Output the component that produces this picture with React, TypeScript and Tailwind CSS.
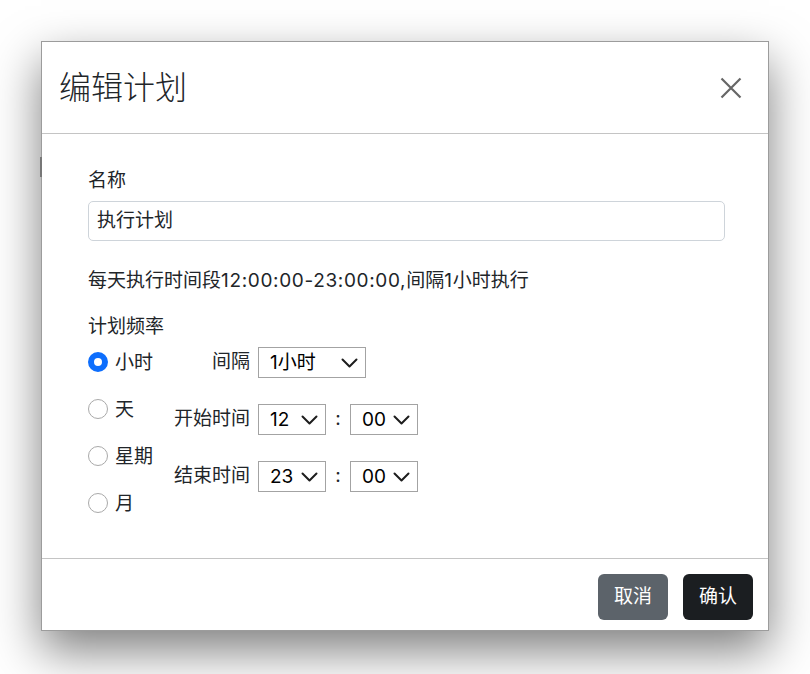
import React from "react";

const font = {
  fontFamily: '"Inter", "Noto Sans CJK SC", sans-serif',
};

function Chevron() {
  return (
    <svg width="17" height="10" viewBox="0 0 17 10" fill="none">
      <polyline
        points="1.5,1.5 8.5,8.5 15.5,1.5"
        stroke="#1d1d1d"
        strokeWidth="2"
        strokeLinecap="round"
        strokeLinejoin="round"
      />
    </svg>
  );
}

function FakeSelect({ value, width }: { value: string; width: string }) {
  return (
    <div
      className={`flex h-[31px] items-center justify-between border border-[#a3a3a3] bg-white pl-[11px] pr-[7px] text-[19px] text-black ${width}`}
    >
      <span className="leading-none">{value}</span>
      <Chevron />
    </div>
  );
}

function Radio({ label, checked }: { label: string; checked?: boolean }) {
  return (
    <label className="flex h-[30px] items-center gap-[7px]">
      {checked ? (
        <span className="block h-[20px] w-[20px] rounded-full border-[6px] border-[#0d6efd] bg-white" />
      ) : (
        <span className="block h-[20px] w-[20px] rounded-full border border-[#a9a9a9] bg-white" />
      )}
      <span className="text-[19px] leading-none text-[#212529]">{label}</span>
    </label>
  );
}

function TimeRow({ label, hour }: { label: string; hour: string }) {
  return (
    <div className="flex h-[31px] items-center">
      <span className="w-[76px] text-right text-[19px] text-[#212529]">
        {label}
      </span>
      <div className="ml-[8px] flex items-center">
        <FakeSelect value={hour} width="w-[68px]" />
        <span className="w-[24px] text-center text-[19px] text-[#212529]">:</span>
        <FakeSelect value="00" width="w-[68px]" />
      </div>
    </div>
  );
}

export default function App() {
  return (
    <div className="min-h-[674px] bg-white pl-[41px] pt-[41px]" style={font}>
      <div className="relative w-[728px] border border-[#9c9c9c] bg-white shadow-[0_20px_45px_rgba(0,0,0,0.5)]">
        <div className="absolute left-[-2px] top-[115px] h-[20px] w-[2px] bg-[#777]" />

        {/* header */}
        <div className="flex h-[92px] items-center justify-between border-b border-[#c4c4c4] pl-[17px] pr-[26px]">
          <h1 className="text-[32px] font-light leading-none text-[#212529]">
            编辑计划
          </h1>
          <svg width="22" height="22" viewBox="0 0 22 22" fill="none">
            <path
              d="M1.5 1.5 L20.5 20.5 M20.5 1.5 L1.5 20.5"
              stroke="#666"
              strokeWidth="2.2"
            />
          </svg>
        </div>

        {/* body */}
        <div className="pb-[40px] pl-[46px] pr-[43px] pt-[35px] text-[#212529]">
          <p className="text-[19px] leading-[24px]">名称</p>
          <div className="mt-[8px] flex h-[40px] items-center rounded-[5px] border border-[#ced4da] px-[8px] text-[19px]">
            执行计划
          </div>
          <p className="mt-[28px] text-[19px] leading-[24px]">
            每天执行时间段
            <span className="tracking-[0.65px]">12:00:00-23:00:00,</span>
            间隔<span className="tracking-[0.65px]">1</span>小时执行
          </p>
          <p className="mt-[22px] text-[19px] leading-[24px]">计划频率</p>

          <div className="mt-[8px] flex">
            <div className="flex w-[86px] flex-col gap-[17px]">
              <Radio label="小时" checked />
              <Radio label="天" />
              <Radio label="星期" />
              <Radio label="月" />
            </div>
            <div className="flex flex-col gap-[26px]">
              <div className="flex h-[31px] items-center">
                <span className="w-[76px] text-right text-[19px]">间隔</span>
                <div className="ml-[8px]">
                  <FakeSelect value="1小时" width="w-[108px]" />
                </div>
              </div>
              <TimeRow label="开始时间" hour="12" />
              <TimeRow label="结束时间" hour="23" />
            </div>
          </div>
        </div>

        {/* footer */}
        <div className="flex justify-end gap-[15px] border-t border-[#c4c4c4] pb-[10px] pr-[15px] pt-[15px]">
          <button className="h-[46px] w-[70px] rounded-[6px] bg-[#5c636a] text-[19px] text-white">
            取消
          </button>
          <button className="h-[46px] w-[70px] rounded-[6px] bg-[#1b1e21] text-[19px] text-white">
            确认
          </button>
        </div>
      </div>
    </div>
  );
}
